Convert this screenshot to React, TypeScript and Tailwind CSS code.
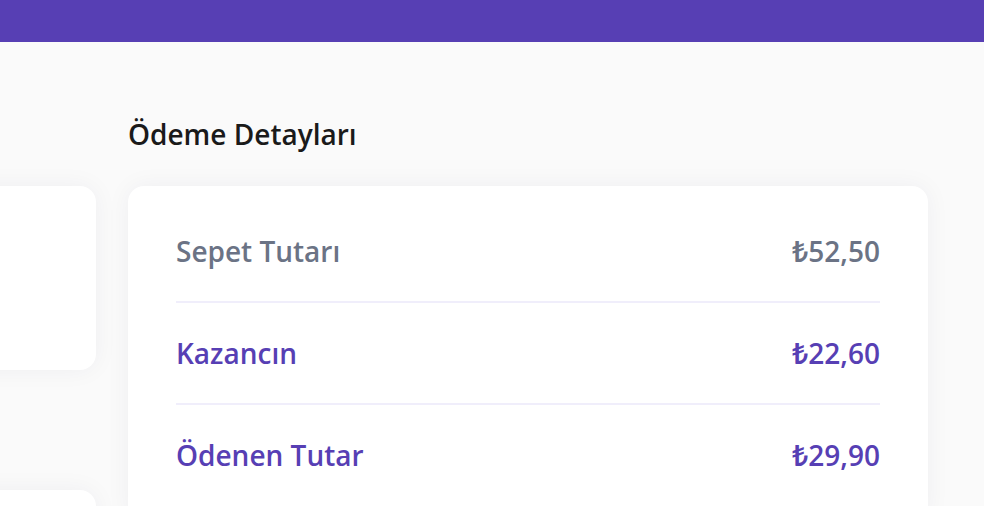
const rows = [
  { label: "Sepet Tutarı", amount: "₺52,50", accent: false },
  { label: "Kazancın", amount: "₺22,60", accent: true },
  { label: "Ödenen Tutar", amount: "₺29,90", accent: true },
];

export default function App() {
  return (
    <div
      className="min-h-screen bg-[#fafafa] overflow-hidden"
      style={{ fontFamily: '"Open Sans", "Noto Sans", sans-serif' }}
    >
      <header className="h-[42px] bg-[#573fb4]" />
      <main className="flex gap-8 pt-[74px]">
        {/* left column, mostly off-screen */}
        <div className="w-[400px] ml-[-304px] shrink-0 flex flex-col gap-[120px] pt-[70px]">
          <div className="h-[184px] rounded-2xl bg-white shadow-[0_0_24px_rgba(30,30,80,0.05)]" />
          <div className="h-[184px] rounded-2xl bg-white shadow-[0_0_24px_rgba(30,30,80,0.05)]" />
        </div>

        <section className="w-[800px] shrink-0">
          <h2 className="text-[28px] leading-[36px] font-semibold text-[#1a1a1a]">
            Ödeme Detayları
          </h2>
          <div className="mt-[34px] rounded-2xl bg-white px-12 pt-[15px] pb-4 shadow-[0_0_24px_rgba(30,30,80,0.05)]">
            {rows.map((row, i) => (
              <div
                key={row.label}
                className={`flex items-center justify-between py-[32px] text-[28px] leading-[36px] font-semibold ${
                  row.accent ? "text-[#573fb4]" : "text-[#6b7385]"
                } ${i < rows.length - 1 ? "border-b-2 border-[#f0eefb]" : ""}`}
              >
                <span>{row.label}</span>
                <span>{row.amount}</span>
              </div>
            ))}
          </div>
        </section>
      </main>
    </div>
  );
}
